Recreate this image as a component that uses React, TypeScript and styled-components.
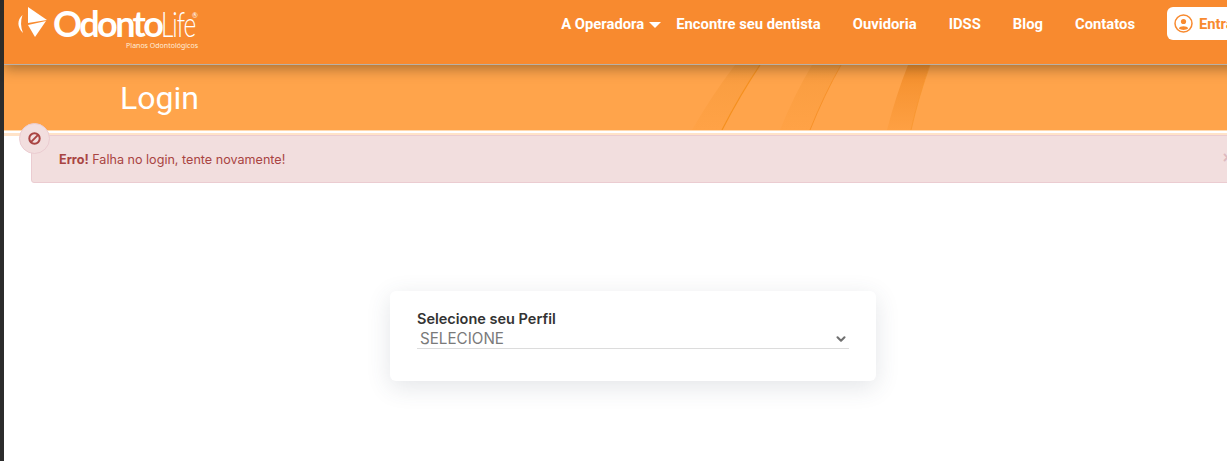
import React from 'react';
import styled, { createGlobalStyle } from 'styled-components';
import { ChevronDown } from 'lucide-react';

const GlobalStyle = createGlobalStyle`
  html, body {
    margin: 0;
    padding: 0;
    height: 100%;
    overflow: hidden;
    background: #fff;
  }
  #root {
    height: 100%;
  }
`;

const Frame = styled.div`
  display: flex;
  height: 461px;
  width: 1227px;
  overflow: hidden;
  font-family: Inter, 'Liberation Sans', sans-serif;
`;

const SideStrip = styled.div`
  flex: 0 0 4px;
  background: #2c2c2c;
`;

const Page = styled.div`
  flex: 0 0 1258px;
  display: flex;
  flex-direction: column;
  background: #fff;
`;

const Header = styled.header`
  position: relative;
  z-index: 2;
  box-sizing: border-box;
  height: 65px;
  display: flex;
  justify-content: space-between;
  padding: 7px 0 0 13px;
  background: #f88a2f;
  border-bottom: 1px solid #b9b0a6;
  box-shadow: 0 4px 12px rgba(70, 50, 20, 0.45);
`;

const Logo = styled.a`
  display: flex;
  align-items: flex-start;
  color: #fff;
`;

const LogoWords = styled.div`
  display: flex;
  flex-direction: column;
  width: 146px;
  margin-left: 5px;
`;

const LogoName = styled.div`
  display: flex;
  align-items: baseline;
  height: 30px;
  line-height: 33px;
  font-size: 36px;
  font-family: Lato, sans-serif;
`;

const LogoBold = styled.span`
  font-weight: 700;
  letter-spacing: -2.6px;
`;

const LogoThin = styled.span`
  display: inline-block;
  font-weight: 300;
  letter-spacing: -1.5px;
  margin: 0 -20px 0 0;
  transform: scaleX(0.68);
  transform-origin: left center;
`;

const LogoMark = styled.sup`
  font-size: 7px;
  line-height: 7px;
  align-self: flex-start;
  margin: 5px 0 0 0;
`;

const LogoTagline = styled.span`
  align-self: flex-end;
  margin: 4px 1px 0 0;
  font-size: 7px;
  line-height: 9px;
  font-family: 'Noto Sans', sans-serif;
  color: #ffeedd;
  white-space: nowrap;
`;

const Nav = styled.nav`
  display: flex;
  align-items: flex-start;
`;

const NavLink = styled.a<{ $gap?: number }>`
  display: flex;
  align-items: center;
  height: 33px;
  margin-right: ${(p) => p.$gap ?? 32}px;
  font-family: Roboto, sans-serif;
  font-size: 14.8px;
  font-weight: 700;
  color: #fff;
  white-space: nowrap;
`;

const Caret = styled.i`
  width: 0;
  height: 0;
  margin: 2px 0 0 5px;
  border-left: 6px solid transparent;
  border-right: 6px solid transparent;
  border-top: 6px solid #fff;
`;

const LoginButton = styled.a`
  box-sizing: border-box;
  width: 95px;
  height: 33px;
  display: flex;
  align-items: center;
  gap: 6px;
  padding-left: 7px;
  background: #fff;
  border-radius: 6px;
  font-family: Roboto, sans-serif;
  font-size: 14.8px;
  font-weight: 700;
  color: #f88a2f;
`;

const Banner = styled.section`
  position: relative;
  box-sizing: border-box;
  height: 66px;
  flex: none;
  padding-left: 116px;
  display: flex;
  align-items: center;
  background: #ffa44b;
  border-bottom: 1px solid #ffd9ae;
`;

const BannerArt = styled.svg`
  position: absolute;
  top: 0;
  left: 0;
  width: 1258px;
  height: 65px;
`;

const BannerTitle = styled.h1`
  position: relative;
  margin: 0;
  font-family: Roboto, sans-serif;
  font-size: 32px;
  font-weight: 400;
  color: #fff;
`;

const AlertBand = styled.div`
  flex: none;
  padding: 4px 27px 0;
  background: linear-gradient(to bottom, #fff 0, #fff 2px, #ffe3c8 2px, #ffe3c8 100%);
  background-size: 100% 5px;
  background-repeat: no-repeat;
`;

const Alert = styled.div`
  position: relative;
  box-sizing: border-box;
  height: 48px;
  display: flex;
  align-items: center;
  padding-left: 27px;
  background: #f2dede;
  border: 1px solid #ebccd1;
  border-radius: 3px;
  font-size: 12.6px;
  color: #a94442;
`;

const AlertBadge = styled.span`
  position: absolute;
  top: -13px;
  left: -13px;
  box-sizing: border-box;
  width: 31px;
  height: 31px;
  display: flex;
  align-items: center;
  justify-content: center;
  background: #f2dede;
  border: 1px solid #ebccd1;
  border-radius: 50%;
`;

const AlertClose = styled.span`
  position: absolute;
  right: 2px;
  top: 13px;
  font-family: 'Liberation Sans', sans-serif;
  font-size: 16px;
  font-weight: 700;
  color: #dcb9bf;
`;

const Main = styled.main`
  flex: 1;
  display: flex;
  justify-content: center;
  padding-top: 108px;
`;

const Card = styled.div`
  box-sizing: border-box;
  width: 486px;
  height: 90px;
  padding: 19px 27px 0;
  background: #fff;
  border-radius: 6px;
  box-shadow: 0 6px 24px rgba(60, 70, 90, 0.14);
`;

const FieldLabel = styled.label`
  display: block;
  font-size: 14.5px;
  line-height: 17px;
  font-weight: 600;
  color: #333;
`;

const SelectBox = styled.div`
  box-sizing: border-box;
  height: 22px;
  display: flex;
  align-items: center;
  justify-content: space-between;
  padding: 2px 1px 0 3px;
  border-bottom: 1px solid #dcdcdc;
  font-size: 15.2px;
  color: #7a7a7a;
`;

const navItems = ['Encontre seu dentista', 'Ouvidoria', 'IDSS', 'Blog', 'Contatos'];

function App() {
  return (
    <Frame>
      <GlobalStyle />
      <SideStrip />
      <Page>
        <Header>
          <Logo>
            <svg width="31" height="31" viewBox="0 0 31 31" fill="#fff">
              <path d="M5.5 8 C0 13 0 20 6 26 C3.6 20 3.4 14 5.5 8 Z" />
              <path d="M11 0 L30 13 L11 16 Z" />
              <path d="M11 18 L29 14 L18 30 Z" />
            </svg>
            <LogoWords>
              <LogoName>
                <LogoBold>Odonto</LogoBold>
                <LogoThin>Life</LogoThin>
                <LogoMark>®</LogoMark>
              </LogoName>
              <LogoTagline>Planos Odontológicos</LogoTagline>
            </LogoWords>
          </Logo>
          <Nav>
            <NavLink $gap={15}>
              A Operadora
              <Caret />
            </NavLink>
            {navItems.map((item) => (
              <NavLink key={item}>{item}</NavLink>
            ))}
            <LoginButton>
              <svg width="19" height="19" viewBox="0 0 19 19" fill="none" stroke="#f88a2f" strokeWidth="1.5">
                <circle cx="9.5" cy="9.5" r="8.5" />
                <circle cx="9.5" cy="7.5" r="2.6" fill="#f88a2f" stroke="none" />
                <path d="M4.8 14.6 C5.5 11.5 13.5 11.5 14.2 14.6 C12 16.4 7 16.4 4.8 14.6 Z" fill="#f88a2f" stroke="none" />
              </svg>
              Entrar
            </LoginButton>
          </Nav>
        </Header>
        <Banner>
          <BannerArt viewBox="0 0 1258 65">
            <defs>
              <linearGradient id="bandSoft" x1="0" y1="0" x2="0" y2="1">
                <stop offset="0" stopColor="#f99d40" />
                <stop offset="1" stopColor="#ffa246" />
              </linearGradient>
              <linearGradient id="bandStrong" x1="0" y1="0" x2="0" y2="1">
                <stop offset="0" stopColor="#f48f2c" />
                <stop offset="1" stopColor="#fea043" />
              </linearGradient>
            </defs>
            <path d="M731 0 L756 0 Q736 30 718 65 L688 65 Q708 30 731 0 Z" fill="url(#bandSoft)" />
            <path d="M808 0 L837 0 Q820 30 806 65 L776 65 Q790 30 808 0 Z" fill="url(#bandSoft)" />
            <path d="M904 0 L926 0 Q915 30 907 65 L883 65 Q892 30 904 0 Z" fill="url(#bandStrong)" />
            <path d="M756 0 Q736 30 718 65" stroke="#f5901f" strokeWidth="1.2" fill="none" />
            <path d="M837 0 Q820 30 806 65" stroke="#f7922a" strokeWidth="1" fill="none" />
            <path d="M926 0 Q915 30 907 65" stroke="#f8952f" strokeWidth="0.8" fill="none" />
          </BannerArt>
          <BannerTitle>Login</BannerTitle>
        </Banner>
        <AlertBand>
          <Alert>
            <AlertBadge>
              <svg width="13" height="13" viewBox="0 0 13 13" fill="none" stroke="#a94442" strokeWidth="2">
                <circle cx="6.5" cy="6.5" r="5.2" />
                <line x1="2.9" y1="10.1" x2="10.1" y2="2.9" />
              </svg>
            </AlertBadge>
            <span>
              <strong>Erro!</strong> Falha no login, tente novamente!
            </span>
            <AlertClose>×</AlertClose>
          </Alert>
        </AlertBand>
        <Main>
          <Card>
            <FieldLabel>Selecione seu Perfil</FieldLabel>
            <SelectBox>
              SELECIONE
              <ChevronDown size={14} color="#707070" strokeWidth={3.6} />
            </SelectBox>
          </Card>
        </Main>
      </Page>
    </Frame>
  );
}

export default App;
